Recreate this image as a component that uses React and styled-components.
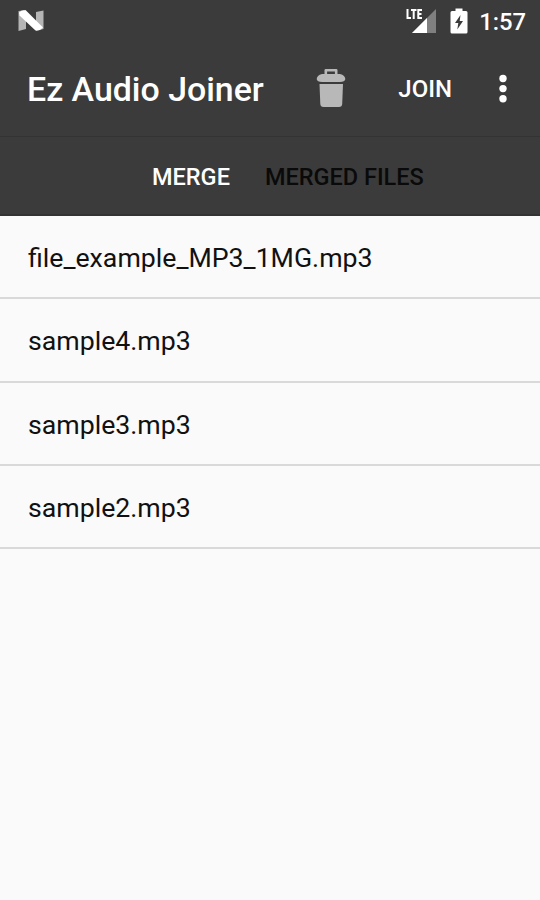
import React, { useState } from "react";
import styled, { createGlobalStyle } from "styled-components";

const GlobalStyle = createGlobalStyle`
  body {
    margin: 0;
    background-color: #fafafa;
    font-family: Roboto, "Liberation Sans", sans-serif;
  }
`;

const Screen = styled.div`
  display: flex;
  flex-direction: column;
  width: 540px;
  height: 900px;
  overflow: hidden;
  background-color: #fafafa;
`;

// Status bar
const StatusBar = styled.div`
  display: flex;
  align-items: center;
  justify-content: space-between;
  box-sizing: border-box;
  height: 42px;
  padding: 0 14px 0 17px;
  background-color: #3b3b3b;
`;

const StatusIcons = styled.div`
  display: flex;
  align-items: center;
`;

const SignalIcon = styled.svg`
  width: 32px;
  height: 28px;
  margin-right: 13px;
`;

const BatteryIcon = styled.svg`
  width: 18px;
  height: 26px;
  margin-right: 11px;
`;

const Clock = styled.span`
  font-size: 23.8px;
  font-weight: 500;
  line-height: 40px;
  padding-top: 2px;
  color: #fff;
`;

// Toolbar
const Toolbar = styled.header`
  display: flex;
  align-items: center;
  box-sizing: border-box;
  height: 95px;
  padding: 0 28px 0 27px;
  background-color: #3b3b3b;
  border-bottom: 1px solid #333;
`;

const Title = styled.h1`
  flex: 1;
  margin: 0;
  padding-top: 2px;
  font-size: 33.9px;
  font-weight: 500;
  line-height: 40px;
  color: #fff;
  white-space: nowrap;
`;

const ToolbarButton = styled.button`
  display: flex;
  align-items: center;
  justify-content: center;
  padding: 0;
  margin-right: ${(props) => props.$gap || 0}px;
  background: none;
  border: none;
  font-family: inherit;
  font-size: 24px;
  font-weight: 500;
  color: #fff;
  cursor: pointer;
`;

// Tabs
const TabBar = styled.nav`
  display: flex;
  align-items: center;
  box-sizing: border-box;
  height: 79px;
  padding: 2px 0 0 152px;
  gap: 35px;
  background-color: #3b3b3b;
  border-bottom: 2px solid #333;
`;

const Tab = styled.button`
  padding: 0;
  background: none;
  border: none;
  font-family: inherit;
  font-size: 23.5px;
  font-weight: 500;
  line-height: 30px;
  color: ${(props) => (props.$active ? "#fff" : "#0a0a0a")};
  white-space: nowrap;
  cursor: pointer;
`;

// File list
const FileList = styled.ul`
  margin: 0;
  padding: 0;
  list-style: none;
`;

const FileRow = styled.li`
  display: flex;
  align-items: center;
  box-sizing: border-box;
  height: 83.3px;
  padding: 2.6px 28px 0;
  border-bottom: 2px solid #d9d9d9;
  font-size: 26.7px;
  color: #111;
`;

const tabs = ["MERGE", "MERGED FILES"];
const files = ["file_example_MP3_1MG.mp3", "sample4.mp3", "sample3.mp3", "sample2.mp3"];

const NougatIcon = () => (
  <svg width="28" height="24" viewBox="0 0 28 24">
    <path d="M1.5 2 L9 1 V20 L1.5 22 Z" fill="#b5b5b5" />
    <path d="M19 3 L26.5 1.5 V20 L19 22 Z" fill="#b5b5b5" />
    <path d="M2 3.5 Q5 0.5 9 1.5 L26 18.5 Q23 22 18.5 21.5 L2.5 6.5 Z" fill="#fff" />
  </svg>
);

const TrashIcon = () => (
  <svg width="30" height="42" viewBox="0 0 30 42">
    <path d="M9.8 7 V2.3 H20.2 V7" fill="none" stroke="#b8b8b8" strokeWidth="2.6" strokeLinejoin="round" />
    <path d="M6 6 H24 C27.5 6.5 29.3 9 29.3 11 C29.3 12.7 27 14 24 14 H6 C3 14 0.7 12.7 0.7 11 C0.7 9 2.5 6.5 6 6 Z" fill="#b8b8b8" />
    <path d="M3.5 16 H27 L26.2 36 Q26 39 23 39 H7.5 Q4.5 39 4.3 36 Z" fill="#b8b8b8" />
  </svg>
);

const MoreIcon = () => (
  <svg width="10" height="30" viewBox="0 0 10 30">
    <circle cx="5" cy="4.5" r="3.7" fill="#fff" />
    <circle cx="5" cy="14.6" r="3.7" fill="#fff" />
    <circle cx="5" cy="24.7" r="3.7" fill="#fff" />
  </svg>
);

const App = () => {
  const [activeTab, setActiveTab] = useState("MERGE");

  return (
    <>
      <GlobalStyle />
      <Screen>
        <StatusBar>
          <NougatIcon />
          <StatusIcons>
            <SignalIcon viewBox="0 0 32 28">
              <path d="M31 2 V26 H7 Z" fill="#808080" />
              <path d="M22 11 V26 H7 Z" fill="#fff" />
              <path
                d="M2.5 2 V11 H6 M6 3 H11.5 M8.7 3 V12 M17 3 H13.3 V11 H17 M13.3 7 H16.5"
                fill="none"
                stroke="#fff"
                strokeWidth="2"
              />
            </SignalIcon>
            <BatteryIcon viewBox="0 0 18 26">
              <path
                d="M5.5 0.5 H12.5 V3 H16 Q17.5 3 17.5 4.5 V24 Q17.5 25.5 16 25.5 H2 Q0.5 25.5 0.5 24 V4.5 Q0.5 3 2 3 H5.5 Z"
                fill="#fff"
              />
              <path d="M10.5 7 L5 15 H8.3 L7.3 21.5 L13 13 H9.7 Z" fill="#3b3b3b" />
            </BatteryIcon>
            <Clock>1:57</Clock>
          </StatusIcons>
        </StatusBar>
        <Toolbar>
          <Title>Ez Audio Joiner</Title>
          <ToolbarButton $gap={52} aria-label="Delete">
            <TrashIcon />
          </ToolbarButton>
          <ToolbarButton $gap={46}>JOIN</ToolbarButton>
          <ToolbarButton $gap={4} aria-label="More options">
            <MoreIcon />
          </ToolbarButton>
        </Toolbar>
        <TabBar>
          {tabs.map((tab) => (
            <Tab key={tab} $active={tab === activeTab} onClick={() => setActiveTab(tab)}>
              {tab}
            </Tab>
          ))}
        </TabBar>
        <FileList>
          {files.map((file) => (
            <FileRow key={file}>{file}</FileRow>
          ))}
        </FileList>
      </Screen>
    </>
  );
};

export default App;
